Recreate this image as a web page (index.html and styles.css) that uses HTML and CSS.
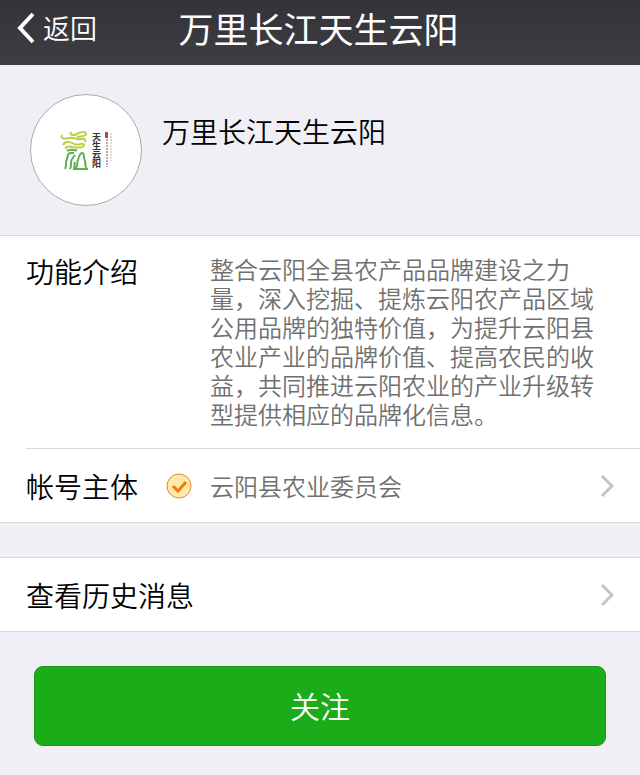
FILE: index.html
```html
<!DOCTYPE html>
<html lang="zh-CN">
<head>
    <meta charset="utf-8">
    <meta name="viewport" content="width=device-width, initial-scale=1">
    <title>万里长江天生云阳</title>
    <link rel="stylesheet" href="styles.css">
</head>
<body>

<header class="navbar">
    <a class="back" href="#">
        <svg class="back-icon" viewBox="0 0 18 32" aria-hidden="true">
            <path d="M16 2 L3 16 L16 30"/>
        </svg>
        返回
    </a>
    <h1>万里长江天生云阳</h1>
</header>

<main>
    <section class="profile">
        <div class="avatar">
            <svg class="avatar-mark" viewBox="0 0 28 40" aria-hidden="true">
                <g class="cloud">
                    <path d="M11 2 C9 5 13 6 17 4 C20 2 26 1 26 4 C26 7 20 6 17 7"/>
                    <path d="M2 5 C0 9 5 9 9 8 C14 7 17 10 21 9 C25 8 26 10 25 12"/>
                    <path d="M3 15 C6 10 11 12 14 14 C17 16 24 12 24 15 C24 18 17 18 12 17 C8 16 5 17 6 19"/>
                </g>
                <g class="hill">
                    <path d="M5 39 C7 35 5 33 7 29 C8 26 7 24 10 23 L14 23"/>
                    <path d="M10 39 C12 35 10 32 12 29 L15 25 M14 39 C15 36 14 34 15 32"/>
                    <path d="M15 39 C19 36 16 33 18 30 C19 26 20 23 22 23 C25 23 23 28 25 31 C26 34 24 36 27 39 Z"/>
                    <path d="M7 21 C10 18 14 21 17 20"/>
                </g>
            </svg>
            <span class="avatar-name">天生云阳</span>
            <svg class="avatar-seal" viewBox="0 0 7 36" aria-hidden="true">
                <rect class="seal" x="0" y="0" width="3" height="6"/>
                <path class="fine" d="M2 7 V35"/>
                <path class="fine pale" d="M6 1 V29"/>
            </svg>
        </div>
        <h2>万里长江天生云阳</h2>
    </section>

    <section class="panel">
        <div class="row intro">
            <h3 class="label">功能介绍</h3>
            <p>整合云阳全县农产品品牌建设之力量，深入挖掘、提炼云阳农产品区域公用品牌的独特价值，为提升云阳县农业产业的品牌价值、提高农民的收益，共同推进云阳农业的产业升级转型提供相应的品牌化信息。</p>
        </div>
        <a class="row link owner" href="#">
            <span class="label">帐号主体</span>
            <svg class="badge" viewBox="0 0 26 26" aria-hidden="true">
                <circle cx="13" cy="13" r="12"/>
                <path d="M7 13 L12 18 L20 9"/>
            </svg>
            <span class="owner-name">云阳县农业委员会</span>
            <svg class="arrow" viewBox="0 0 14 24" aria-hidden="true">
                <path d="M2 2 L12 12 L2 22"/>
            </svg>
        </a>
    </section>

    <section class="panel">
        <a class="row link" href="#">
            <span class="label">查看历史消息</span>
            <svg class="arrow" viewBox="0 0 14 24" aria-hidden="true">
                <path d="M2 2 L12 12 L2 22"/>
            </svg>
        </a>
    </section>

    <div class="actions">
        <button class="follow" type="button">关注</button>
    </div>
</main>

</body>
</html>
```
FILE: styles.css
```css
* {
    padding: 0;
    margin: 0;
    box-sizing: border-box;
}

body {
    background-color: #efeff5;
    color: #000;
    font-family: "Noto Sans CJK SC", sans-serif;
    font-weight: 350;
}

a {
    color: inherit;
    text-decoration: none;
}

svg {
    display: block;
    flex: none;
    fill: none;
}

/* top bar */
.navbar {
    display: grid;
    grid-template-columns: 1fr auto 1fr;
    align-items: center;
    height: 65px;
    padding: 0 20px 10px 17px;
    background: linear-gradient(#343338, #3e3d43);
    color: #fff;
}

.navbar h1 {
    font-size: 35px;
    line-height: 48px;
    font-weight: 400;
}

.back {
    display: flex;
    align-items: center;
    gap: 8px;
    font-size: 27px;
    line-height: 40px;
}

.back-icon {
    width: 18px;
    height: 32px;
    stroke: #fff;
    stroke-width: 4;
}

/* account */
.profile {
    display: flex;
    align-items: flex-start;
    gap: 20px;
    padding: 29px 30px;
}

.profile h2 {
    padding-top: 17px;
    font-size: 28px;
    line-height: 40px;
    font-weight: 350;
}

.avatar {
    display: flex;
    flex: none;
    align-items: center;
    justify-content: center;
    gap: 2px;
    width: 112px;
    height: 112px;
    border: 1px solid #aaaab0;
    border-radius: 50%;
    background-color: #fff;
}

.avatar-mark {
    width: 28px;
    height: 40px;
    stroke-width: 2;
}

.cloud {
    stroke: #b9cf45;
}

.hill {
    stroke: #5fae52;
}

.avatar-name {
    writing-mode: vertical-rl;
    color: #333;
    font-size: 9px;
    line-height: 13px;
    font-weight: 700;
}

.avatar-seal {
    width: 7px;
    height: 36px;
}

.seal {
    fill: #b5484c;
}

.fine {
    stroke: #b5adac;
    stroke-width: 2;
    stroke-dasharray: 2 1;
}

.pale {
    stroke: #e4d8d8;
}

/* lists */
.panel {
    margin-bottom: 34px;
    padding-left: 26px;
    border-top: 1px solid #d9d9dc;
    border-bottom: 1px solid #d9d9dc;
    background-color: #fff;
}

.row {
    display: flex;
    align-items: center;
    padding-right: 26px;
}

.label {
    font-size: 28px;
    line-height: 40px;
    font-weight: 350;
}

.intro {
    align-items: flex-start;
    gap: 72px;
    padding-top: 15px;
    padding-bottom: 20px;
    border-bottom: 1px solid #d9d9dc;
}

.intro p {
    flex: 1;
    padding-top: 3px;
    padding-right: 10px;
    color: #707070;
    font-size: 24px;
    line-height: 29px;
}

.link {
    height: 73px;
}

.badge {
    width: 26px;
    height: 26px;
    margin: 0 18px 0 28px;
    stroke: #e8852a;
}

.badge circle {
    fill: #ffe9ae;
    stroke-width: 1;
}

.badge path {
    stroke: #f57c00;
    stroke-width: 3;
}

.owner-name {
    color: #707070;
    font-size: 24px;
    line-height: 36px;
}

.arrow {
    width: 14px;
    height: 24px;
    margin-left: auto;
    stroke: #c5c5c9;
    stroke-width: 3;
}

.actions {
    padding: 0 34px 28px;
}

.follow {
    width: 100%;
    height: 80px;
    padding-bottom: 3px;
    border: 1px solid #199518;
    border-radius: 9px;
    background-color: #1bac1a;
    color: #fff;
    font-family: inherit;
    font-size: 30px;
    font-weight: 350;
    cursor: pointer;
}
```
